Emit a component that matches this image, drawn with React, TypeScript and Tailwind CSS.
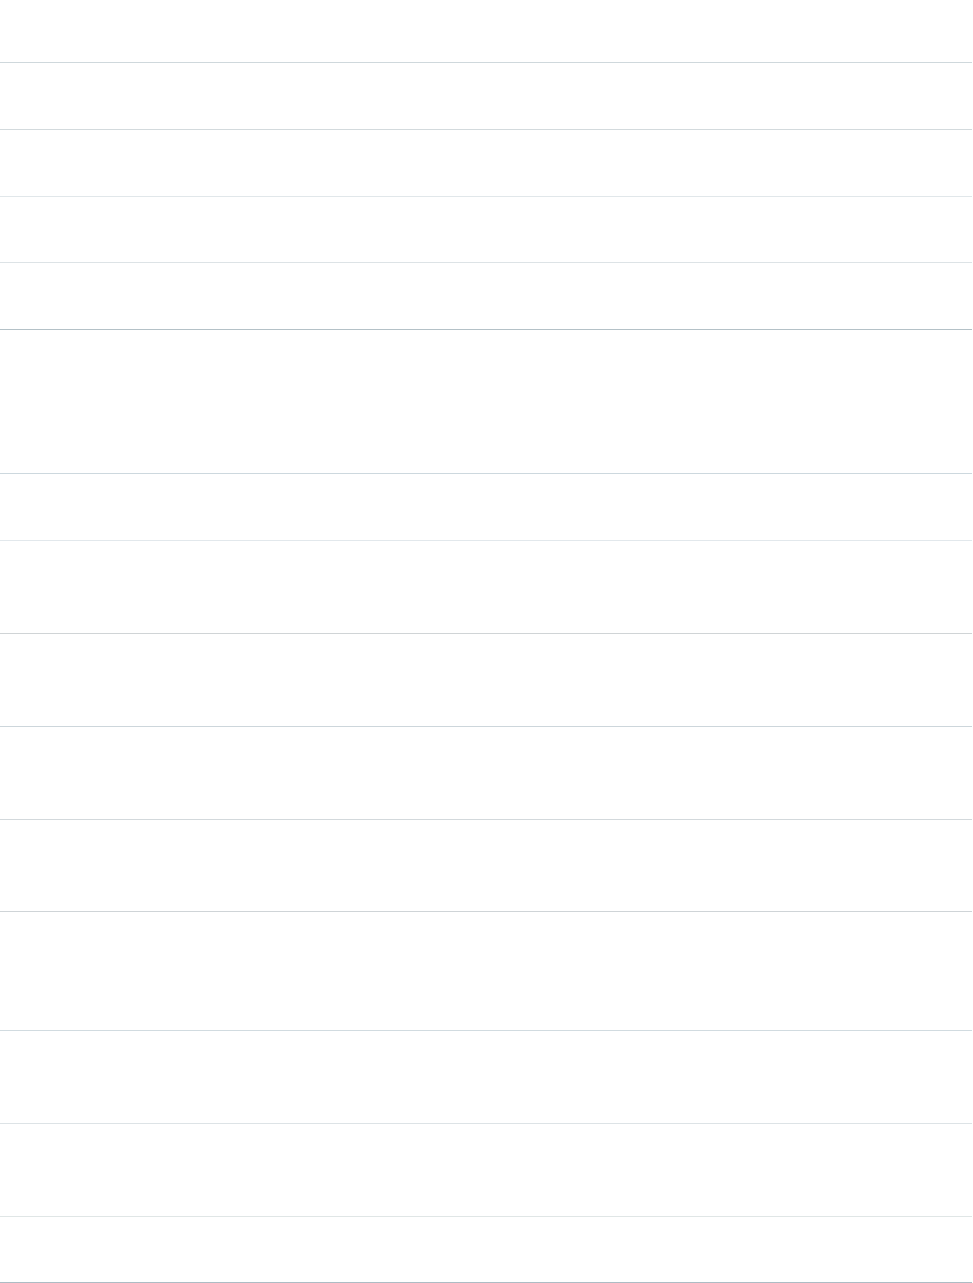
import React from 'react';

// empty list rows, only the dividers show
const rows = [
    { h: 'h-[63px]', line: 'border-[#cfd8dc]' },
    { h: 'h-[67px]', line: 'border-[#d3dadd]' },
    { h: 'h-[67px]', line: 'border-[#e1e7ea]' },
    { h: 'h-[66px]', line: 'border-[#dde3e6]' },
    { h: 'h-[67px]', line: 'border-[#b4c1c7]' },
    { h: 'h-[144px]', line: 'border-[#cdd8de]' },
    { h: 'h-[67px]', line: 'border-[#e2e8ec]' },
    { h: 'h-[93px]', line: 'border-[#d0d4d6]' },
    { h: 'h-[93px]', line: 'border-[#cdd6db]' },
    { h: 'h-[93px]', line: 'border-[#d3d9dc]' },
    { h: 'h-[92px]', line: 'border-[#cfd4d7]' },
    { h: 'h-[119px]', line: 'border-[#d1dbe0]' },
    { h: 'h-[93px]', line: 'border-[#dde3e6]' },
    { h: 'h-[93px]', line: 'border-[#e0e6e6]' },
    { h: 'h-[66px]', line: 'border-[#adbcc4]' },
];

function App() {
    return (
        <div className="min-h-screen bg-white">
            <div className="w-[972px] flex flex-col">
                {rows.map((row, i) => (
                    <div key={i} className={`${row.h} ${row.line} border-b w-full`} />
                ))}
            </div>
        </div>
    );
}

export default App;
